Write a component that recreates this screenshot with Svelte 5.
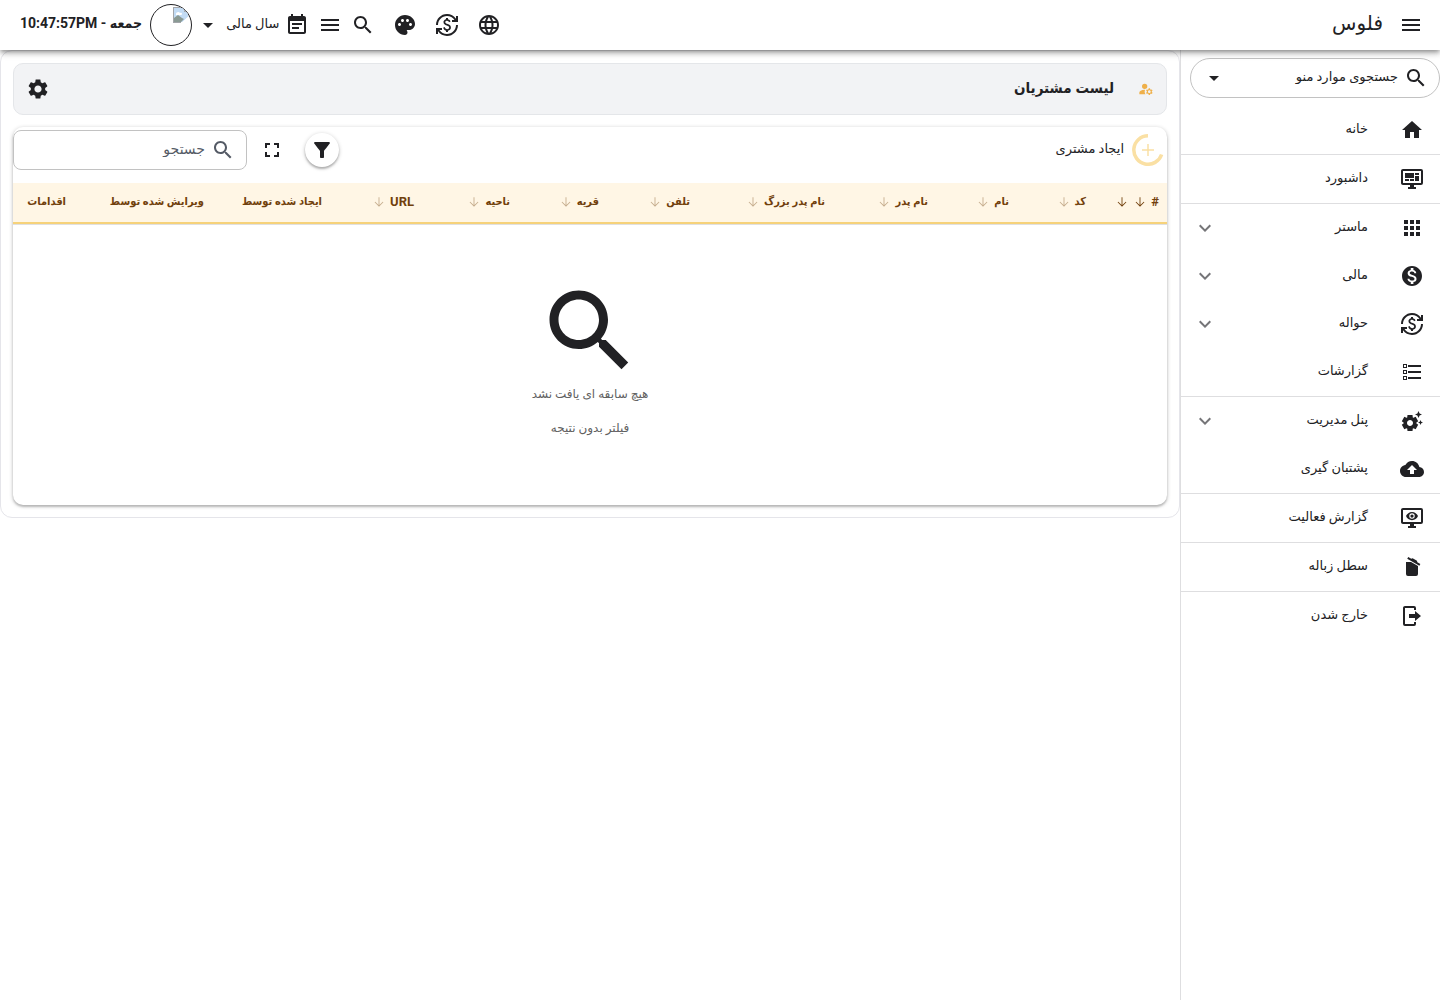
<script>
  const monitor = 'M21 16V4H3v12h18m0-14a2 2 0 0 1 2 2v12a2 2 0 0 1-2 2h-7v2h2v2H8v-2h2v-2H3c-1.11 0-2-.9-2-2V4c0-1.11.89-2 2-2h18';
  const icons = {
    menu: 'M3 18h18v-2H3v2zm0-5h18v-2H3v2zm0-7v2h18V6H3z',
    search: 'M15.5 14h-.79l-.28-.27C15.41 12.59 16 11.11 16 9.5 16 5.91 13.09 3 9.5 3S3 5.91 3 9.5 5.91 16 9.5 16c1.61 0 3.09-.59 4.23-1.57l.27.28v.79l5 4.99L20.49 19l-4.99-5zm-6 0C7.01 14 5 11.99 5 9.5S7.01 5 9.5 5 14 7.01 14 9.5 11.99 14 9.5 14z',
    globe: 'M11.99 2C6.47 2 2 6.48 2 12s4.47 10 9.99 10C17.52 22 22 17.52 22 12S17.52 2 11.99 2zm6.93 6h-2.95c-.32-1.25-.78-2.45-1.38-3.56 1.84.63 3.37 1.91 4.33 3.56zM12 4.04c.83 1.2 1.48 2.53 1.91 3.96h-3.82c.43-1.43 1.08-2.76 1.91-3.96zM4.26 14C4.1 13.36 4 12.69 4 12s.1-1.36.26-2h3.38c-.08.66-.14 1.32-.14 2 0 .68.06 1.34.14 2H4.26zm.82 2h2.95c.32 1.25.78 2.45 1.38 3.56-1.84-.63-3.37-1.9-4.33-3.56zm2.95-8H5.08c.96-1.66 2.49-2.93 4.33-3.56C8.81 5.55 8.35 6.75 8.03 8zM12 19.96c-.83-1.2-1.48-2.53-1.91-3.96h3.82c-.43 1.43-1.08 2.76-1.91 3.96zM14.34 14H9.66c-.09-.66-.16-1.32-.16-2 0-.68.07-1.35.16-2h4.68c.09.65.16 1.32.16 2 0 .68-.07 1.34-.16 2zm.25 5.56c.6-1.11 1.06-2.31 1.38-3.56h2.95c-.96 1.65-2.49 2.93-4.33 3.56zM16.36 14c.08-.66.14-1.32.14-2 0-.68-.06-1.34-.14-2h3.38c.16.64.26 1.31.26 2s-.1 1.36-.26 2h-3.38z',
    exchange: 'M12.89 11.1c-1.78-.59-2.64-.96-2.64-1.9 0-1.02 1.11-1.39 1.81-1.39 1.31 0 1.79.99 1.9 1.34l1.58-.67C15.39 8.03 14.72 6.56 13 6.24V5h-2v1.26C8.52 6.82 8.51 9.11 8.51 9.22c0 2.27 2.25 2.91 3.35 3.31 1.58.56 2.28 1.07 2.28 2.03 0 1.13-1.05 1.61-1.98 1.61-1.82 0-2.34-1.87-2.4-2.09l-1.66.67c.63 2.19 2.28 2.78 2.9 2.96V19h2v-1.24c.4-.09 2.9-.59 2.9-3.22 0-1.39-.61-2.61-3.01-3.44zM3 21H1v-6h6v2H4.52c1.61 2.41 4.36 4 7.48 4 4.97 0 9-4.03 9-9h2c0 6.08-4.92 11-11 11-3.72 0-7.01-1.85-9-4.67V21zM1 12C1 5.92 5.92 1 12 1c3.72 0 7.01 1.85 9 4.67V3h2v6h-6V7h2.48C17.87 4.59 15.12 3 12 3c-4.97 0-9 4.03-9 9H1z',
    palette: 'M12 2C6.49 2 2 6.49 2 12s4.49 10 10 10c1.38 0 2.5-1.12 2.5-2.5 0-.61-.23-1.2-.64-1.67-.08-.1-.13-.21-.13-.33 0-.28.22-.5.5-.5H16c3.31 0 6-2.69 6-6 0-4.96-4.49-9-10-9zm5.5 11c-.83 0-1.5-.67-1.5-1.5s.67-1.5 1.5-1.5 1.5.67 1.5 1.5-.67 1.5-1.5 1.5zm-3-4c-.83 0-1.5-.67-1.5-1.5S13.67 6 14.5 6s1.5.67 1.5 1.5S15.33 9 14.5 9zM5 11.5c0-.83.67-1.5 1.5-1.5s1.5.67 1.5 1.5S7.33 13 6.5 13 5 12.33 5 11.5zm6-4c0 .83-.67 1.5-1.5 1.5S8 8.33 8 7.5 8.67 6 9.5 6s1.5.67 1.5 1.5z',
    calendar: 'M17 10H7v2h10v-2zm2-7h-1V1h-2v2H8V1H6v2H5c-1.11 0-1.99.9-1.99 2L3 19c0 1.1.89 2 2 2h14c1.1 0 2-.9 2-2V5c0-1.1-.9-2-2-2zm0 16H5V8h14v11zm-5-5H7v2h7v-2z',
    drop: 'M7 10l5 5 5-5z',
    settings: 'M19.14 12.94c.04-.3.06-.61.06-.94 0-.32-.02-.64-.07-.94l2.03-1.58c.18-.14.23-.41.12-.61l-1.92-3.32c-.12-.22-.37-.29-.59-.22l-2.39.96c-.5-.38-1.03-.7-1.62-.94l-.36-2.54c-.04-.24-.24-.41-.48-.41h-3.84c-.24 0-.43.17-.47.41l-.36 2.54c-.59.24-1.13.57-1.62.94l-2.39-.96c-.22-.08-.47 0-.59.22L2.74 8.87c-.12.21-.08.47.12.61l2.03 1.58c-.05.3-.09.63-.09.94s.02.64.07.94l-2.03 1.58c-.18.14-.23.41-.12.61l1.92 3.32c.12.22.37.29.59.22l2.39-.96c.5.38 1.03.7 1.62.94l.36 2.54c.05.24.24.41.48.41h3.84c.24 0 .44-.17.47-.41l.36-2.54c.59-.24 1.13-.56 1.62-.94l2.39.96c.22.08.47 0 .59-.22l1.92-3.32c.12-.22.07-.47-.12-.61l-2.01-1.58zM12 15.6c-1.98 0-3.6-1.62-3.6-3.6s1.62-3.6 3.6-3.6 3.6 1.62 3.6 3.6-1.62 3.6-3.6 3.6z',
    home: 'M10 20v-6h4v6h5v-8h3L12 3 2 12h3v8z',
    dashboard: monitor + 'M5 6h9v5H5V6m10 0h4v2h-4V6m4 3v5h-4V9h4M5 12h4v2H5v-2m5 0h4v2h-4v-2z',
    apps: 'M4 8h4V4H4v4zm6 12h4v-4h-4v4zm-6 0h4v-4H4v4zm0-6h4v-4H4v4zm6 0h4v-4h-4v4zm6-10v4h4V4h-4zm-6 4h4V4h-4v4zm6 6h4v-4h-4v4zm0 6h4v-4h-4v4z',
    money: 'M12 2C6.48 2 2 6.48 2 12s4.48 10 10 10 10-4.48 10-10S17.52 2 12 2zm1.41 16.09V20h-2.67v-1.93c-1.71-.36-3.16-1.46-3.27-3.4h1.96c.1 1.05.82 1.87 2.65 1.87 1.96 0 2.4-.98 2.4-1.59 0-.83-.44-1.61-2.67-2.14-2.48-.6-4.18-1.62-4.18-3.67 0-1.72 1.39-2.84 3.11-3.21V4h2.67v1.95c1.86.45 2.79 1.86 2.85 3.39H14.3c-.05-1.11-.64-1.87-2.22-1.87-1.5 0-2.4.68-2.4 1.64 0 .84.65 1.39 2.67 1.91s4.18 1.39 4.18 3.91c-.01 1.83-1.38 2.83-3.12 3.16z',
    list: 'M3 4h4v4H3zM4 5v2h2V5zM3 10h4v4H3zM4 11v2h2v-2zM3 16h4v4H3zM4 17v2h2v-2zM8 5h13v2H8zM8 11h13v2H8zM8 17h13v2H8z',
    admin: 'M17.41 6.59L15 5.5l2.41-1.09L18.5 2l1.09 2.41L22 5.5l-2.41 1.09L18.5 9l-1.09-2.41zm3.87 6.13L20.5 11l-.78 1.72-1.72.78 1.72.78.78 1.72.78-1.72L23 13.5l-1.72-.78zm-5.04 1.65l1.94 1.47-2.5 4.33-2.24-.94c-.2.13-.42.26-.64.37l-.3 2.4h-5l-.3-2.41c-.22-.11-.43-.23-.64-.37l-2.24.94-2.5-4.33 1.94-1.47c-.01-.11-.01-.24-.01-.36s0-.25.01-.37l-1.94-1.47 2.5-4.33 2.24.94c.2-.13.42-.26.64-.37L7.5 6h5l.3 2.41c.22.11.43.23.64.37l2.24-.94 2.5 4.33-1.94 1.47c.01.12.01.24.01.37s0 .24-.01.36zM13 14c0-1.66-1.34-3-3-3s-3 1.34-3 3 1.34 3 3 3 3-1.34 3-3z',
    cloud: 'M19.35 10.04C18.67 6.59 15.64 4 12 4 9.11 4 6.6 5.64 5.35 8.04 2.34 8.36 0 10.91 0 14c0 3.31 2.69 6 6 6h13c2.76 0 5-2.24 5-5 0-2.64-2.05-4.78-4.65-4.96zM14 13v4h-4v-4H7l5-5 5 5h-3z',
    eye: monitor + 'M12 8.45a1.64 1.64 0 1 0 0 3.28 1.64 1.64 0 0 0 0-3.28M12 12.82a2.73 2.73 0 1 1 0-5.46 2.73 2.73 0 0 1 0 5.46M6 10.09C6.94 7.7 9.27 6 12 6s5.06 1.7 6 4.09c-.94 2.41-3.27 4.09-6 4.09s-5.06-1.68-6-4.09z',
    trash: 'M20.37 8.91l-1 1.73-12.13-7 1-1.73 3.04 1.75 1.36-.37 4.33 2.5.37 1.37 3.03 1.75M6 19V7h5.07L18 11v8a2 2 0 0 1-2 2H8a2 2 0 0 1-2-2z',
    exit: 'M5 2h9a2 2 0 0 1 2 2v2h-2V4H5v16h9v-2h2v2a2 2 0 0 1-2 2H5a2 2 0 0 1-2-2V4c0-1.1.9-2 2-2zM15 7l6 5-6 5v-3H9v-4h6z',
    account: 'M10.67 13.02c-.22-.01-.44-.02-.67-.02-2.42 0-4.68.67-6.61 1.82-.88.52-1.39 1.5-1.39 2.53V20h9.26C10.47 18.87 10 17.49 10 16c0-1.07.25-2.07.67-2.98zM10 4a4 4 0 1 0 0 8 4 4 0 0 0 0-8zM20.75 16c0-.22-.03-.42-.06-.63l1.14-1.01-1-1.73-1.45.49c-.32-.27-.68-.48-1.08-.63L18 11h-2l-.3 1.49c-.4.15-.76.36-1.08.63l-1.45-.49-1 1.73 1.14 1.01c-.03.21-.06.41-.06.63s.03.42.06.63l-1.14 1.01 1 1.73 1.45-.49c.32.27.68.48 1.08.63L16 21h2l.3-1.49c.4-.15.76-.36 1.08-.63l1.45.49 1-1.73-1.14-1.01c.03-.21.06-.41.06-.63zM17 18c-1.1 0-2-.9-2-2s.9-2 2-2 2 .9 2 2-.9 2-2 2z',
    fullscreen: 'M7 14H5v5h5v-2H7v-3zm-2-4h2V7h3V5H5v5zm12 7h-3v2h5v-5h-2v3zM14 5v2h3v3h2V5h-5z',
    filter: 'M4.25 5.61C6.27 8.2 10 13 10 13v6c0 .55.45 1 1 1h2c.55 0 1-.45 1-1v-6s3.72-4.8 5.74-7.39c.51-.66.04-1.61-.79-1.61H5.04c-.83 0-1.3.95-.79 1.61z',
    expand: 'M16.59 8.59L12 13.17 7.41 8.59 6 10l6 6 6-6z',
    arrow: 'M11.25 4h1.5v13.2l5.7-5.7 1.05 1.05L12 20l-7.5-7.45 1.05-1.05 5.7 5.7z',
  };

  const menu = [
    { icon: 'home', label: 'خانه', line: true },
    { icon: 'dashboard', label: 'داشبورد', line: true },
    { icon: 'apps', label: 'ماستر', group: true },
    { icon: 'money', label: 'مالی', group: true },
    { icon: 'exchange', label: 'حواله', group: true },
    { icon: 'list', label: 'گزارشات', line: true },
    { icon: 'admin', label: 'پنل مدیریت', group: true },
    { icon: 'cloud', label: 'پشتبان گیری', line: true },
    { icon: 'eye', label: 'گزارش فعالیت', line: true },
    { icon: 'trash', label: 'سطل زباله', line: true },
    { icon: 'exit', label: 'خارج شدن' },
  ];

  const columns = [
    { label: '#', share: 73, sort: 'active', latin: true },
    { label: 'کد', share: 77, sort: 'idle' },
    { label: 'نام', share: 81, sort: 'idle' },
    { label: 'نام پدر', share: 103, sort: 'idle' },
    { label: 'نام پدر بزرگ', share: 135, sort: 'idle' },
    { label: 'تلفن', share: 91, sort: 'idle' },
    { label: 'قریه', share: 89, sort: 'idle' },
    { label: 'ناحیه', share: 96, sort: 'idle' },
    { label: 'URL', share: 92, sort: 'idle', latin: true },
    { label: 'ایجاد شده توسط', share: 118 },
    { label: 'ویرایش شده توسط', share: 138 },
    { label: 'اقدامات', share: 61 },
  ];
  const total = columns.reduce((sum, c) => sum + c.share, 0);
</script>

{#snippet icon(name, size = '')}
  <svg class="icon {size}" viewBox="0 0 24 24" fill-rule="evenodd" aria-hidden="true"><path d={icons[name]} /></svg>
{/snippet}

<div class="app" dir="rtl">
  <header>
    <button class="toggle" aria-label="منو">{@render icon('menu')}</button>
    <h1>فلوس</h1>
    <div class="tools">
      <button aria-label="زبان">{@render icon('globe')}</button>
      <button aria-label="تبدیل اسعار">{@render icon('exchange')}</button>
      <button aria-label="رنگ">{@render icon('palette')}</button>
      <button class="tight" aria-label="جستجو">{@render icon('search')}</button>
      <button class="tight" aria-label="فهرست">{@render icon('menu')}</button>
      <button class="year">{@render icon('calendar')}<span>سال مالی</span>{@render icon('drop')}</button>
      <button class="avatar" aria-label="کاربر">
        <svg viewBox="0 0 16 16" aria-hidden="true">
          <path class="sky" d="M1 1h10l4 4v5l-5 5H1z" />
          <path class="cloud" d="M3 7c0-2 3-3 4-1 2-1 3 2 1 2H3z" />
          <path class="hill" d="M1 15v-4l4-3 4 3 2 1-3 3z" />
          <path class="frame" d="M0 0h11v1H1v14h7v1H0zM11 0l5 5h-5zM15 5h1v4l-1 1z" />
          <path class="tear" d="M16 9v7H8z" />
        </svg>
      </button>
      <time>جمعه - <bdi>10:47:57PM</bdi></time>
    </div>
  </header>

  <div class="body">
    <aside>
      <label class="menu-search">
        {@render icon('search')}
        <input type="text" placeholder="جستجوی موارد منو" />
        {@render icon('drop')}
      </label>
      <nav>
        {#each menu as item}
          <a href="#top" class:line={item.line}>
            {@render icon(item.icon)}
            <span>{item.label}</span>
            {#if item.group}{@render icon('expand', 'chevron')}{/if}
          </a>
        {/each}
      </nav>
    </aside>

    <main>
      <div class="title">
        {@render icon('account', 'tiny')}
        <h2>لیست مشتریان</h2>
        <button aria-label="تنظیمات">{@render icon('settings')}</button>
      </div>

      <section>
        <div class="toolbar">
          <button class="create">
            <svg class="ring" viewBox="0 0 32 32" aria-hidden="true">
              <path d="M16 1.75A14.25 14.25 0 1 0 29.6 20.500" stroke-width="3.5" />
              <path d="M16 10v12M10 16h12" stroke-width="1.5" />
            </svg>
            <span>ایجاد مشتری</span>
          </button>
          <button class="filter" aria-label="فیلتر">{@render icon('filter')}</button>
          <button class="full" aria-label="تمام صفحه">{@render icon('fullscreen')}</button>
          <label class="search">
            {@render icon('search')}
            <input type="text" placeholder="جستجو" />
          </label>
        </div>

        <table>
          <colgroup>
            {#each columns as c}<col style:width="{(c.share / total) * 100}%" />{/each}
          </colgroup>
          <thead>
            <tr>
              {#each columns as c}
                <th scope="col">
                  <div class="head">
                    <span class:latin={c.latin}>{c.label}</span>
                    {#if c.sort === 'active'}
                      {@render icon('arrow', 'sort')}{@render icon('arrow', 'sort')}
                    {:else if c.sort}
                      {@render icon('arrow', 'sort idle')}
                    {/if}
                  </div>
                </th>
              {/each}
            </tr>
          </thead>
          <tbody>
            <tr>
              <td colspan={columns.length}>
                <div class="empty">
                  {@render icon('search', 'huge')}
                  <p>هیچ سابقه ای یافت نشد</p>
                  <p>فیلتر بدون نتیجه</p>
                </div>
              </td>
            </tr>
          </tbody>
        </table>
      </section>
    </main>
  </div>
</div>

<style>
  :global(body) { background: #fff; }
  .app {
    min-height: 100vh;
    display: flex;
    flex-direction: column;
    font: 13px/24px Roboto, "DejaVu Sans", sans-serif;
    color: #212124;
  }
  * { box-sizing: border-box; }
  h1, h2, p { margin: 0; }
  button, input { font: inherit; color: inherit; border: 0; background: none; padding: 0; }
  button { display: flex; align-items: center; cursor: pointer; }
  .icon { width: 24px; height: 24px; flex: none; fill: currentColor; }

  header {
    height: 50px;
    display: flex;
    align-items: center;
    padding: 0 17px 0 20px;
    background: #fff;
    position: relative;
    z-index: 2;
    box-shadow: 0 2px 4px -1px rgb(0 0 0 / 30%), 0 4px 5px rgb(0 0 0 / 16%), 0 1px 10px rgb(0 0 0 / 14%);
  }
  h1 { font-size: 20px; font-weight: 400; line-height: 32px; margin-inline-start: 16px; padding-bottom: 4px; }
  .tools { margin-inline-start: auto; display: flex; align-items: center; gap: 18px; }
  .tools .tight { margin-inline-end: -9px; }
  .year { gap: 6px; }
  .year span { padding-bottom: 2px; }
  .tools .year { margin-inline-end: -14px; }
  .avatar {
    width: 42px;
    height: 42px;
    border: 1px solid #212124;
    border-radius: 50%;
    overflow: hidden;
    align-items: flex-start;
    padding: 2px;
  }
  .avatar svg { width: 16px; height: 16px; flex: none; }
  .sky { fill: #c3dcf5; }
  .cloud, .tear { fill: #fff; }
  .hill { fill: #8a9a94; }
  .frame { fill: #a3a6aa; }
  time, h2, th { font-family: Roboto, "DejaVu Sans Condensed", "DejaVu Sans", sans-serif; font-weight: 700; }
  time { font-size: 14px; margin-inline-start: -10px; padding-bottom: 4px; white-space: nowrap; }

  .body { flex: 1; display: flex; align-items: stretch; }
  aside { width: 260px; flex: none; border-left: 1px solid #dedee0; padding-top: 8px; }
  .menu-search {
    height: 40px;
    margin-left: 9px;
    padding: 0 11px;
    display: flex;
    align-items: center;
    gap: 6px;
    border: 1px solid #c2c2c2;
    border-radius: 20px;
  }
  input { flex: 1; min-width: 0; outline: none; padding-bottom: 2px; }
  input::placeholder { color: inherit; opacity: 1; }
  nav { padding-top: 8px; }
  nav a {
    min-height: 48px;
    padding: 0 16px;
    display: flex;
    align-items: center;
    gap: 32px;
    color: inherit;
    text-decoration: none;
  }
  nav .line { min-height: 49px; border-bottom: 1px solid #dedee0; }
  nav span { padding-bottom: 2px; }
  nav .chevron { margin-inline-start: auto; margin-inline-end: -4px; color: #757578; }

  main {
    flex: 1;
    min-width: 0;
    align-self: flex-start;
    border: 1px solid #e5e5ea;
    border-radius: 12px;
    padding: 12px;
  }
  .title {
    height: 52px;
    display: flex;
    align-items: center;
    padding: 0 12px;
    background: #f2f3f5;
    border: 1px solid #e4e6e9;
    border-radius: 10px;
  }
  .title .tiny { width: 16px; height: 16px; color: #efb04a; }
  h2 { font-size: 15px; margin-inline-start: 24px; padding-bottom: 2px; }
  .title button { margin-inline-start: auto; }
  section {
    margin-top: 12px;
    border-radius: 10px;
    overflow: hidden;
    box-shadow: 0 1px 4px rgb(0 0 0 / 24%), 0 2px 2px rgb(0 0 0 / 16%);
  }
  .toolbar { height: 56px; display: flex; align-items: flex-start; padding-top: 3px; }
  .create { height: 40px; gap: 8px; padding-right: 3px; }
  .create span { padding-bottom: 2px; }
  .ring { width: 32px; height: 32px; fill: none; stroke: #fae0a4; }
  .filter {
    width: 34px;
    height: 34px;
    margin-top: 3px;
    margin-inline-start: auto;
    margin-inline-end: 20px;
    justify-content: center;
    border-radius: 50%;
    box-shadow: 0 1px 4px rgb(0 0 0 / 22%), 0 2px 2px rgb(0 0 0 / 20%);
  }
  .full { height: 40px; padding: 0 1px; margin-inline-end: 12px; }
  .search {
    width: 234px;
    height: 40px;
    display: flex;
    align-items: center;
    gap: 6px;
    padding: 0 11px;
    border: 1px solid #c2c2c2;
    border-radius: 8px;
    color: #555b66;
    font-size: 14px;
  }
  table { width: 100%; table-layout: fixed; border-spacing: 0; }
  th {
    height: 41px;
    padding: 0 8px 2px 0;
    background: #fff6e5;
    border-bottom: 2px solid #f6d27a;
    color: #71400c;
    font-size: 11px;
  }
  .head { display: flex; align-items: center; gap: 4px; white-space: nowrap; }
  .latin { font-size: 13px; }
  .head .sort { width: 14px; height: 14px; }
  .head .idle { opacity: .4; }
  td { padding: 0; border-top: 1px solid #e0e0e0; }
  .empty {
    height: 280px;
    display: flex;
    flex-direction: column;
    align-items: center;
    padding-top: 52px;
    gap: 10px;
    color: #616161;
    font-size: 12px;
  }
  .empty .huge { width: 108px; height: 108px; margin-bottom: -13px; color: #212124; }
</style>
